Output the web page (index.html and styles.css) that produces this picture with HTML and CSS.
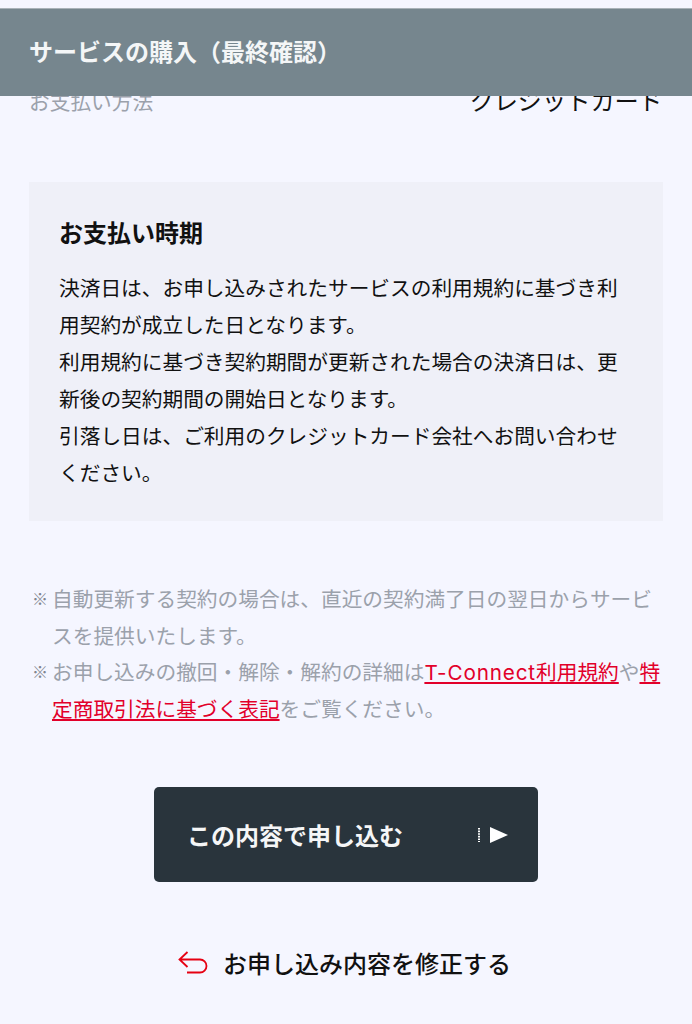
FILE: index.html
```html
<!DOCTYPE html>
<html lang="ja">
<head>
    <meta charset="UTF-8">
    <meta name="viewport" content="width=device-width, initial-scale=1.0">
    <title>サービスの購入（最終確認）</title>
    <link rel="stylesheet" href="styles.css">
</head>
<body>
    <header class="page-header">
        <h1>サービスの購入（最終確認）</h1>
    </header>
    <main class="content">
        <div class="pay-row">
            <span class="pay-label">お支払い方法</span>
            <span class="pay-value">クレジットカード</span>
        </div>
        <section class="timing">
            <h2>お支払い時期</h2>
            <p>決済日は、お申し込みされたサービスの利用規約に基づき利用契約が成立した日となります。<br>利用規約に基づき契約期間が更新された場合の決済日は、更新後の契約期間の開始日となります。<br>引落し日は、ご利用のクレジットカード会社へお問い合わせください。</p>
        </section>
        <ul class="notes">
            <li>自動更新する契約の場合は、直近の契約満了日の翌日からサービスを提供いたします。</li>
            <li>お申し込みの撤回・解除・解約の詳細は<a href="#"><span class="latin">T-Connect</span>利用規約</a>や<a href="#">特定商取引法に基づく表記</a>をご覧ください。</li>
        </ul>
        <a class="submit" href="#">
            <span>この内容で申し込む</span>
            <span class="submit-mark">
                <svg width="31" height="16" viewBox="0 0 31 16">
                    <path d="M1 1v14" stroke="#fff" stroke-width="2" stroke-dasharray="1.6 1" fill="none"/>
                    <path d="M12 0l18 8-18 8z" fill="#fff"/>
                </svg>
            </span>
        </a>
        <a class="back" href="#">
            <svg width="30" height="23" viewBox="0 0 30 23">
                <path d="M9.500 1L1.500 8.500l8 7.500M1.500 8.500h20.500a6.500 6.500 0 0 1 0 13H9" stroke="#e60012" stroke-width="1.800" fill="none"/>
            </svg>
            <span>お申し込み内容を修正する</span>
        </a>
    </main>
</body>
</html>
```

FILE: styles.css
```css
body {
    margin: 0;
    background-color: #f5f6ff;
    color: #111;
    font-family: "Noto Sans CJK JP", "Noto Sans", sans-serif;
    font-size: 20.7px;
    height: 1024px;
    overflow: hidden;
    position: relative;
}
.page-header {
    position: absolute;
    top: 8px;
    left: 0;
    right: 0;
    height: 88px;
    box-sizing: border-box;
    padding: 0 29px 4px;
    display: flex;
    align-items: center;
    background-color: #76868e;
    border-top: 1px solid #a9b2b8;
}
.page-header h1 {
    margin: 0;
    color: #f4f6f7;
    font-size: 24px;
    font-weight: 700;
}
.content {
    padding: 84px 29px 0;
}
.pay-row {
    display: flex;
    justify-content: space-between;
    align-items: center;
    height: 34px;
}
.pay-label {
    color: #9ba1ab;
}
.pay-value {
    font-size: 24.200px;
    margin-top: -3px;
}
.timing {
    margin-top: 64px;
    padding: 33px 30px 30px;
    background-color: #eff0f8;
}
.timing h2 {
    margin: 0 0 21px;
    font-size: 24px;
    line-height: 33px;
    font-weight: 700;
}
.timing p {
    margin: 0;
    line-height: 37px;
}
.notes {
    list-style: none;
    margin: 59px 0 0;
    padding: 0 0 0 23px;
    color: #9ba1ab;
    line-height: 36.500px;
}
.notes li {
    position: relative;
}
.notes li::before {
    content: "※";
    position: absolute;
    left: -20px;
    font-size: 16px;
    color: #7f858f;
}
.notes a {
    color: #e2002a;
}
.latin {
    font-family: Inter, sans-serif;
    line-height: 1;
    letter-spacing: 0.85px;
}
.submit {
    display: flex;
    justify-content: space-between;
    align-items: center;
    box-sizing: border-box;
    width: 384px;
    height: 95px;
    margin: 61px auto 0;
    padding: 0 29px 0 33px;
    background-color: #29343c;
    border-radius: 5px;
    color: #f5f6f7;
    font-size: 24px;
    font-weight: 700;
    text-decoration: none;
}
.submit-mark {
    display: flex;
}
.back {
    display: flex;
    justify-content: center;
    align-items: center;
    gap: 15px;
    margin-top: 63px;
    padding-right: 3px;
    color: #111;
    font-size: 24px;
    font-weight: 500;
    text-decoration: none;
}
```
